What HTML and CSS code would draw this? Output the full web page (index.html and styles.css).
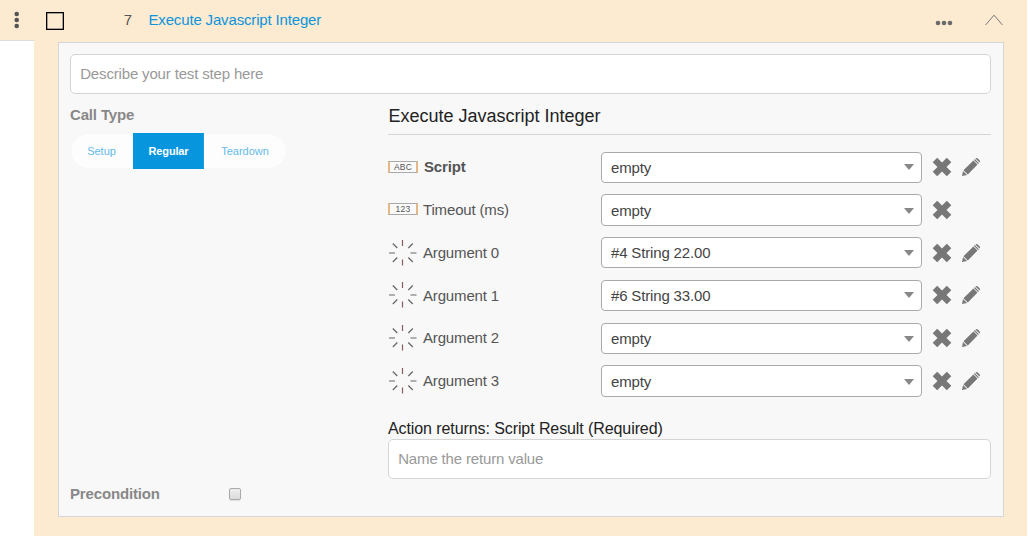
FILE: index.html
```html
<!DOCTYPE html>
<html lang="en">
<head>
<meta charset="utf-8">
<title>Test step</title>
<link rel="stylesheet" href="styles.css">
</head>
<body>
<svg class="defs" width="0" height="0">
  <symbol id="cross" viewBox="0 0 20 20"><path d="M5.200 .7 L10 5.500 14.800 .7 19.300 5.200 14.500 10 19.300 14.800 14.800 19.300 10 14.500 5.200 19.300 .7 14.800 5.500 10 .7 5.200Z"/></symbol>
  <symbol id="pencil" viewBox="0 0 20 20"><path d="M1 19 L2 14 6 18Z M2.500 13.200 L12.400 3.500 16.500 7.600 6.800 17.500Z M13 2.900 L13.800 2.100 17.900 6.200 17.100 7Z M14.400 1.500 Q15.600 .5 16.800 1.400 L18.600 3.200 Q19.500 4.400 18.500 5.600Z"/></symbol>
  <symbol id="spokes" viewBox="0 0 30 28"><path class="upright" d="M14.500 1v6M14.500 20.500v6"/><path d="M1 14h6M22.500 14h6M4.800 4.500l4.500 4.500M24.800 4.500l-4.500 4.500M4.800 23l4.500-4.500M24.800 23l-4.500-4.500"/></symbol>
</svg>
<div class="step">
  <header class="step-head">
    <svg class="grip" viewBox="0 0 6 18"><circle cx="2.700" cy="3" r="2.300"/><circle cx="2.700" cy="9" r="2.300"/><circle cx="2.700" cy="15" r="2.300"/></svg>
    <span class="select-box"></span>
    <span class="number">7</span>
    <a class="title">Execute Javascript Integer</a>
    <svg class="more" viewBox="0 0 18 6"><circle cx="3" cy="3" r="2.300"/><circle cx="9" cy="3" r="2.300"/><circle cx="15" cy="3" r="2.300"/></svg>
    <svg class="collapse" viewBox="0 0 20 12"><path d="M1.500 11 L10 1.200 18.500 11"/></svg>
  </header>
  <div class="step-body">
    <aside class="gutter"></aside>
    <section class="panel">
      <div class="field">Describe your test step here</div>
      <div class="columns">
        <div class="options">
          <div class="label">Call Type</div>
          <div class="segments"><span class="segment">Setup</span><span class="segment active">Regular</span><span class="segment">Teardown</span></div>
          <div class="precondition"><span class="label">Precondition</span><span class="check"></span></div>
        </div>
        <div class="action">
          <h2 class="action-title">Execute Javascript Integer</h2>
          <div class="rows">
            <div class="row"><span class="type">ABC</span><span class="name required">Script</span><div class="select">empty<i class="caret"></i></div><svg class="icon"><use href="#cross"/></svg><svg class="icon"><use href="#pencil"/></svg></div>
            <div class="row"><span class="type">123</span><span class="name">Timeout (ms)</span><div class="select lowered">empty<i class="caret"></i></div><svg class="icon"><use href="#cross"/></svg></div>
            <div class="row"><svg class="any"><use href="#spokes"/></svg><span class="name">Argument 0</span><div class="select raised">#4 String 22.00<i class="caret"></i></div><svg class="icon"><use href="#cross"/></svg><svg class="icon"><use href="#pencil"/></svg></div>
            <div class="row"><svg class="any"><use href="#spokes"/></svg><span class="name">Argument 1</span><div class="select">#6 String 33.00<i class="caret"></i></div><svg class="icon"><use href="#cross"/></svg><svg class="icon"><use href="#pencil"/></svg></div>
            <div class="row"><svg class="any"><use href="#spokes"/></svg><span class="name snug">Argument 2</span><div class="select lowered">empty<i class="caret"></i></div><svg class="icon"><use href="#cross"/></svg><svg class="icon"><use href="#pencil"/></svg></div>
            <div class="row"><svg class="any"><use href="#spokes"/></svg><span class="name">Argument 3</span><div class="select lowered">empty<i class="caret"></i></div><svg class="icon"><use href="#cross"/></svg><svg class="icon"><use href="#pencil"/></svg></div>
          </div>
          <div class="returns">Action returns: Script Result (Required)</div>
          <div class="field">Name the return value</div>
        </div>
      </div>
    </section>
  </div>
</div>
</body>
</html>
```

FILE: styles.css
```css
* { box-sizing: border-box; }
body { margin: 0; background: #fff; font: 15px/20px "Liberation Sans", Arial, sans-serif; letter-spacing: -.16px; color: #555; }
.defs { display: block; height: 0; }
.step { width: 1027px; height: 536px; background: #fcead1; display: flex; flex-direction: column; }
.step-head { height: 40px; display: flex; align-items: center; padding: 0 23px 0 14px; }
.grip { width: 6px; height: 18px; fill: #555; }
.select-box { width: 18px; height: 18px; border: 1px solid #000; box-shadow: inset 0 0 0 .5px #555; margin: 1px 0 0 26px; }
.number { width: 68px; text-align: right; }
.title { margin-left: 16.500px; color: #0d94dc; flex: 1; }
.more { width: 18px; height: 6px; fill: #6b6b6b; margin: 6px 31px 0 0; }
.collapse { width: 20px; height: 12px; fill: none; stroke: #777; stroke-width: 1; }
.step-body { flex: 1; display: flex; }
.gutter { width: 34px; background: #fff; border-top: 1px solid #ddd; }
.panel { width: 946px; height: 475px; margin: 2px 0 0 24px; border: 1px solid #d4d6d8; background: #f8f8f8; padding: 11px 12px 0 11px; }
.field { height: 40px; border: 1px solid #d5d5d5; border-radius: 5px; background: #fff; color: #999; padding: 0 9.200px; line-height: 38px; }
.columns { display: flex; height: 416px; }
.options { width: 318px; display: flex; flex-direction: column; padding-top: 11px; }
.label { font-weight: bold; color: #888; }
.segments { display: flex; align-items: center; margin: 8px 0 0 1px; letter-spacing: 0; }
.segment { height: 34px; line-height: 34px; background: #fdfdfd; color: #64bbe8; font-size: 11px; width: 82px; text-align: center; box-shadow: 0 0 1px #eee; }
.segment:first-child { width: 62px; padding-right: 1px; border-radius: 17px 0 0 17px; }
.segment:last-child { border-radius: 0 17px 17px 0; }
.segment.active { width: 71px; height: 36px; line-height: 36px; background: #0795dd; color: #fff; font-weight: bold; box-shadow: none; letter-spacing: -.15px; }
.precondition { margin-top: auto; display: flex; align-items: center; height: 20px; margin-bottom: 6px; }
.precondition .label { width: 159px; }
.check { width: 12px; height: 12px; border: 1px solid #aaa; border-radius: 2px; background: linear-gradient(#eee, #dadada); box-shadow: 0 1px 1px #ddd; }
.action { width: 603px; }
.action-title { height: 41px; margin: 0 0 16.750px; border-bottom: 1px solid #d5d5d5; font-size: 18px; font-weight: normal; line-height: 44px; letter-spacing: 0; color: #222; padding-left: .5px; }
.rows { height: 267.250px; }
.row { height: 42.700px; display: flex; align-items: flex-start; }
.type { width: 30px; height: 12px; margin-top: 9px; border: 1px solid #aaa; border-left: 2px solid #e6b887; border-right: 2px solid #e6b887; background: #fafafa; color: #555; font-size: 8.500px; line-height: 11px; letter-spacing: .2px; text-align: center; }
.any { width: 30px; height: 28px; margin-top: 1.400px; fill: none; stroke: #666; stroke-width: 1.200; }
.upright { stroke: #855f5f; }
.name { width: 178px; margin-left: 5px; line-height: 32px; white-space: nowrap; }
.snug { line-height: 30.500px; }
.required { font-weight: bold; padding-left: 1px; line-height: 30.500px; }
.select { width: 321px; height: 31.350px; border: 1px solid #aaa; border-radius: 4px; background: #fff; color: #444; line-height: 31.500px; padding: 0 7px 0 9px; display: flex; align-items: center; justify-content: space-between; margin-right: 10px; }
.raised { line-height: 30px; }
.lowered { padding-top: 1.400px; }
.caret { border: 5px solid transparent; border-top: 6px solid #888; border-bottom: 0; }
.icon { width: 20px; height: 20px; margin: 5.600px 9px 0 0; fill: #777; }
.returns { font-size: 16px; height: 20px; letter-spacing: -.09px; color: #222; }
```
